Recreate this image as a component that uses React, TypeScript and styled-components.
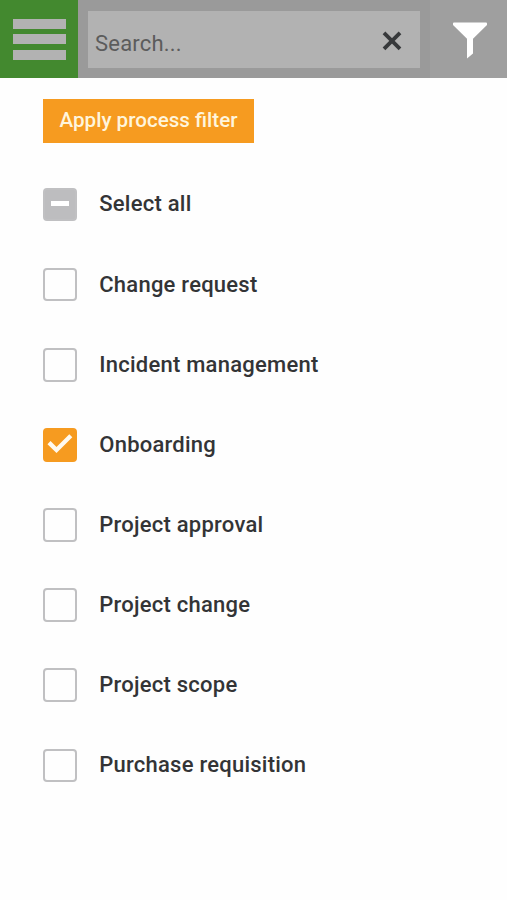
import React, { useState } from "react";
import styled, { createGlobalStyle } from "styled-components";

const GlobalStyle = createGlobalStyle`
  * { box-sizing: border-box; }
  body { margin: 0; background: #fefefe; font-family: Roboto, sans-serif; color: #333436; }
  button, input { font-family: inherit; border: 0; padding: 0; margin: 0; border-radius: 0; }
  button { cursor: pointer; }
`;

const Page = styled.div`
  min-height: 900px;
  background: #fefefe;
`;

const TopBar = styled.header`
  display: flex;
  height: 78px;
  background: #9a9a9a;
`;

const MenuButton = styled.button`
  display: flex;
  flex-direction: column;
  gap: 5.3px;
  width: 78px;
  height: 78px;
  padding: 19px 12px 0 13px;
  background: #43892f;
`;

const MenuBar = styled.span`
  width: 100%;
  height: 10.1px;
  background: #b2b2b2;
`;

const SearchBox = styled.div`
  display: flex;
  width: 332px;
  height: 57px;
  margin: 11px 10px 0;
  background: #b2b2b2;
`;

const SearchInput = styled.input`
  flex: 1;
  min-width: 0;
  padding: 8px 0 0 7px;
  background: transparent;
  font-size: 22px;
  letter-spacing: 0.2px;
  color: #333436;
  outline: none;
  &::placeholder { color: #5c5c5c; opacity: 1; }
`;

const ClearButton = styled.button`
  width: 56px;
  height: 57px;
  background: transparent;
  svg { display: block; }
`;

const FilterButton = styled.button`
  flex: 1;
  background: #9f9f9f;
  svg { display: block; }
`;

const Content = styled.main`
  padding: 21px 43px;
`;

const ApplyButton = styled.button`
  display: block;
  width: 211px;
  height: 43.5px;
  background: #f69b20;
  color: #fff5dc;
  font-size: 20.6px;
  font-weight: 500;
  line-height: 42px;
  padding-bottom: 1px;
`;

const Options = styled.div`
  display: flex;
  flex-direction: column;
  margin-top: 22px;
`;

const Option = styled.button`
  display: flex;
  align-items: center;
  gap: 22.75px;
  height: 80.12px;
  background: transparent;
  color: #333436;
  text-align: left;
`;

type CheckState = "off" | "on" | "mixed";
const fills = { off: "transparent", on: "#f69b20", mixed: "#bdbdbf" };

const Box = styled.span<{ $state: CheckState }>`
  display: flex;
  align-items: center;
  justify-content: center;
  flex: none;
  width: 33.5px;
  height: 33.5px;
  border: 2.5px solid ${(p) => (p.$state === "on" ? "#f69b20" : "#c0c0c2")};
  border-radius: 4px;
  background: ${(p) => fills[p.$state]};
  svg { flex: none; }
`;

const Dash = styled.span`
  width: 18px;
  height: 4.5px;
  margin-top: -2px;
  background: #fff;
`;

const Label = styled.span`
  font-size: 22px;
  font-weight: 500;
  letter-spacing: 0.24px;
  line-height: 26px;
  padding-bottom: 0.2px;
  white-space: nowrap;
`;

const Check = () => (
  <svg width="34" height="34" viewBox="0 0 34 34" fill="none">
    <path d="M6 14.6 13.5 22 27.8 7.8" stroke="#fffaf0" strokeWidth="4.3" />
  </svg>
);

const names = [
  "Change request",
  "Incident management",
  "Onboarding",
  "Project approval",
  "Project change",
  "Project scope",
  "Purchase requisition",
];

export default function App() {
  const [query, setQuery] = useState("");
  const [selected, setSelected] = useState<string[]>(["Onboarding"]);

  const toggle = (name: string) =>
    setSelected((s) => (s.includes(name) ? s.filter((n) => n !== name) : [...s, name]));
  const allState: CheckState =
    selected.length === 0 ? "off" : selected.length === names.length ? "on" : "mixed";

  const renderOption = (name: string, state: CheckState, onClick: () => void) => (
    <Option
      key={name}
      role="checkbox"
      aria-checked={state === "mixed" ? "mixed" : state === "on"}
      onClick={onClick}
    >
      <Box $state={state}>
        {state === "on" && <Check />}
        {state === "mixed" && <Dash />}
      </Box>
      <Label>{name}</Label>
    </Option>
  );

  return (
    <Page>
      <GlobalStyle />
      <TopBar>
        <MenuButton aria-label="Menu">
          <MenuBar />
          <MenuBar />
          <MenuBar />
        </MenuButton>
        <SearchBox>
          <SearchInput
            placeholder="Search..."
            value={query}
            onChange={(e) => setQuery(e.target.value)}
          />
          <ClearButton aria-label="Clear" onClick={() => setQuery("")}>
            <svg width="56" height="57" viewBox="0 0 56 57" fill="none">
              <path
                d="M20 21.8 36 37.8M36 21.8 20 37.8"
                stroke="#37393b"
                strokeWidth="3.8"
              />
            </svg>
          </ClearButton>
        </SearchBox>
        <FilterButton aria-label="Filter">
          <svg width="77" height="78" viewBox="0 0 77 78">
            <path
              d="M24 22.5H56Q57 22.5 57 23.5V25L43 38.8V53.5L37 58.5V38.8L23 25V23.5Q23 22.5 24 22.5Z"
              fill="#fff"
            />
          </svg>
        </FilterButton>
      </TopBar>
      <Content>
        <ApplyButton>Apply process filter</ApplyButton>
        <Options>
          {renderOption("Select all", allState, () =>
            setSelected(selected.length === names.length ? [] : names)
          )}
          {names.map((n) => renderOption(n, selected.includes(n) ? "on" : "off", () => toggle(n)))}
        </Options>
      </Content>
    </Page>
  );
}
